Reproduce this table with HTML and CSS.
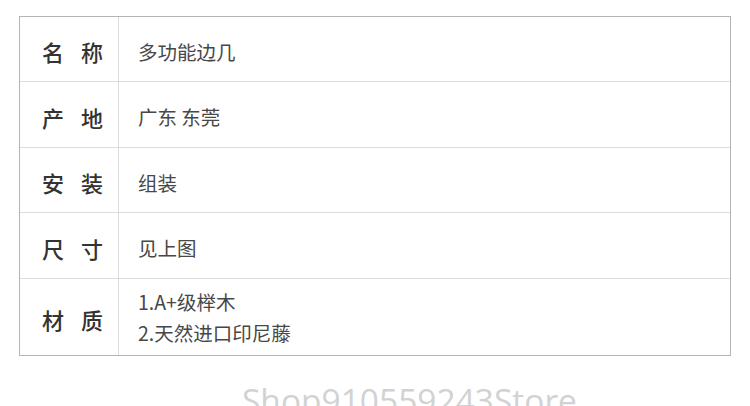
FILE: index.html
```html
<!DOCTYPE html>
<html lang="zh-CN">
<head>
    <meta charset="UTF-8">
    <meta name="viewport" content="width=device-width, initial-scale=1.0">
    <title>产品参数</title>
    <link rel="stylesheet" href="styles.css">
</head>
<body>
    <div class="spec-table">
        <div class="spec-row">
            <div class="spec-label">名称</div>
            <div class="spec-value">多功能边几</div>
        </div>
        <div class="spec-row">
            <div class="spec-label">产地</div>
            <div class="spec-value">广东 东莞</div>
        </div>
        <div class="spec-row">
            <div class="spec-label">安装</div>
            <div class="spec-value">组装</div>
        </div>
        <div class="spec-row">
            <div class="spec-label">尺寸</div>
            <div class="spec-value">见上图</div>
        </div>
        <div class="spec-row tall">
            <div class="spec-label">材质</div>
            <div class="spec-value">1.A+级榉木<br>2.天然进口印尼藤</div>
        </div>
    </div>
    <div class="watermark">Shop910559243Store</div>
</body>
</html>
```

FILE: styles.css
```css
body {
    font-family: "Noto Sans CJK SC", "Noto Sans", sans-serif;
    background-color: #ffffff;
    margin: 0;
    padding: 16px 19px 0 19px;
    overflow: hidden;
    height: 406px;
    box-sizing: border-box;
}

.spec-table {
    width: 712px;
    border: 1px solid #b4b4b4;
    box-sizing: border-box;
}

.spec-row {
    display: grid;
    grid-template-columns: 99px 1fr;
    height: 65px;
    box-sizing: border-box;
    border-bottom: 1px solid #dcdcdc;
}

.spec-row:nth-child(even) {
    height: 66px;
}

.spec-row.tall {
    height: 76px;
    border-bottom: none;
}

.spec-label {
    display: flex;
    align-items: center;
    padding-left: 22px;
    padding-top: 4px;
    font-size: 22px;
    font-weight: 500;
    letter-spacing: 17px;
    white-space: nowrap;
    color: #333;
    border-right: 1px solid #dcdcdc;
}

.spec-value {
    display: flex;
    align-items: center;
    padding-left: 19px;
    padding-top: 4px;
    font-size: 19.5px;
    line-height: 31px;
    color: #474747;
}

.spec-row.tall .spec-value {
    padding-top: 0;
}

.watermark {
    margin-top: 22px;
    margin-left: 223px;
    font-family: "Open Sans", sans-serif;
    font-size: 33.5px;
    color: #d2d2d2;
    line-height: 44px;
    white-space: nowrap;
}
```
